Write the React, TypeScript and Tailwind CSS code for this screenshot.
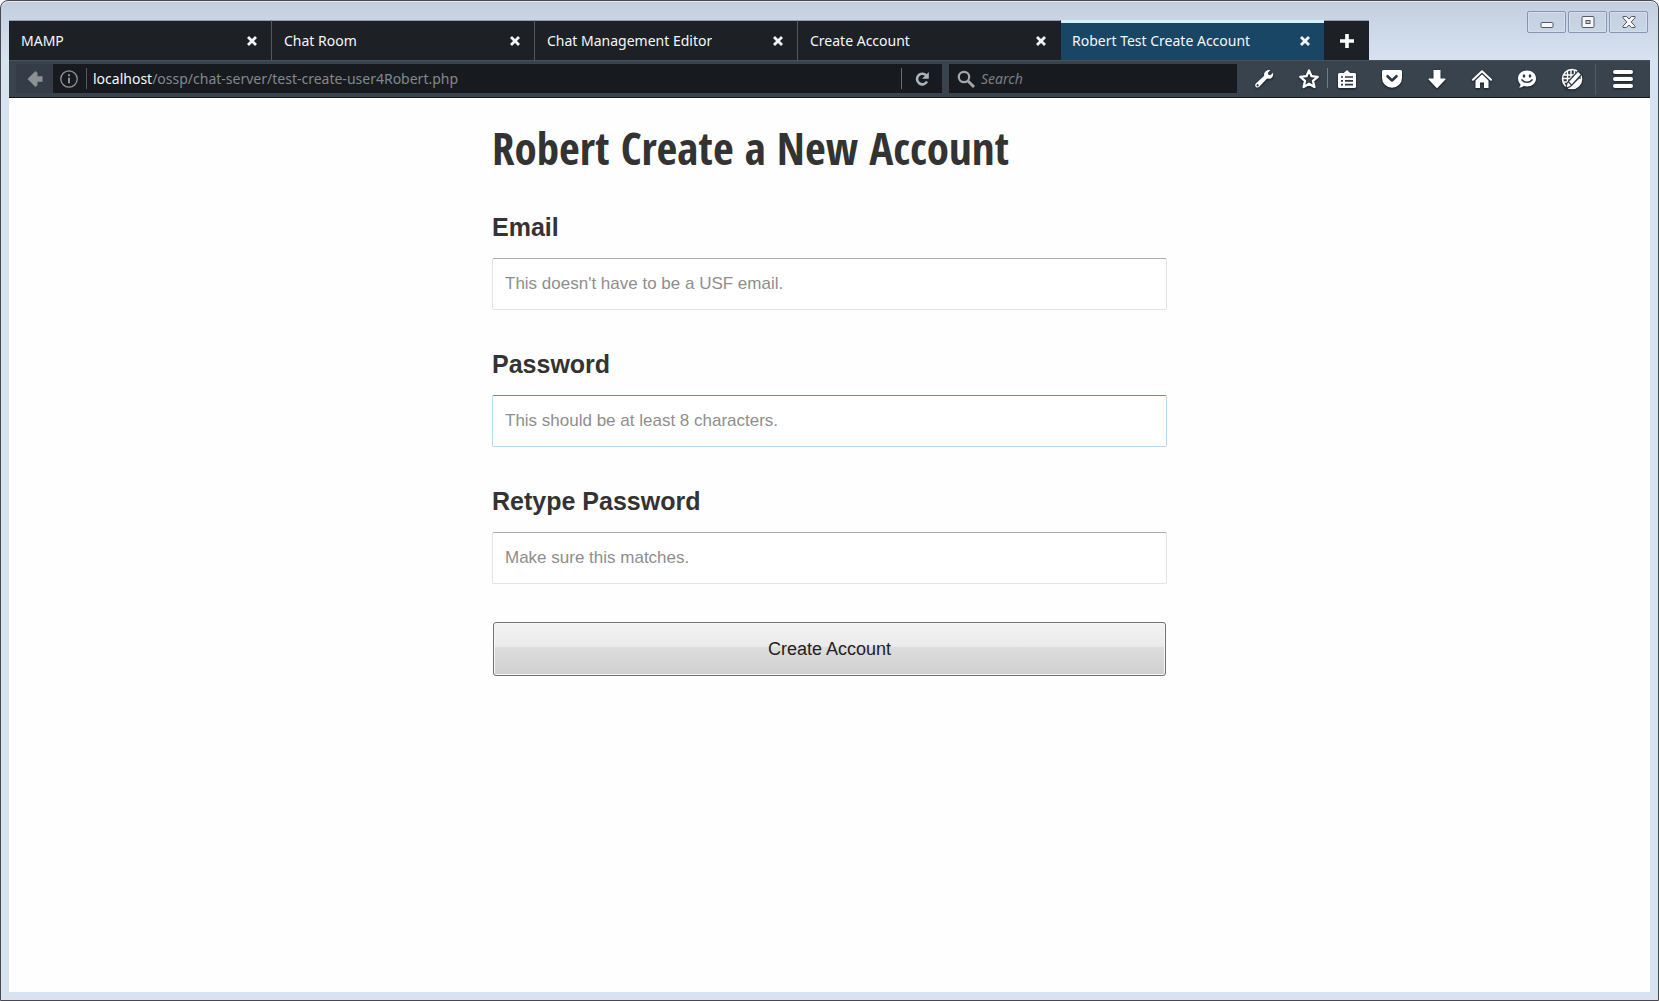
import React from 'react';

const tabs = [
  { title: 'MAMP', active: false },
  { title: 'Chat Room', active: false },
  { title: 'Chat Management Editor', active: false },
  { title: 'Create Account', active: false },
  { title: 'Robert Test Create Account', active: true },
];

const fields = [
  { id: 'email', label: 'Email', type: 'email', hint: "This doesn't have to be a USF email.", focused: false },
  { id: 'password', label: 'Password', type: 'password', hint: 'This should be at least 8 characters.', focused: true },
  { id: 'retype', label: 'Retype Password', type: 'password', hint: 'Make sure this matches.', focused: false },
];

function CloseIcon() {
  return (
    <svg width="10" height="10" viewBox="0 0 10 10" stroke="#f2f4f5" strokeWidth="2.8" aria-hidden="true">
      <path d="M1 1l8 8M9 1L1 9" />
    </svg>
  );
}

function WindowControls() {
  const style =
    'flex h-[22px] w-[39px] items-center justify-center rounded-[2px] border border-[#8796ae] bg-gradient-to-b from-[#c6d0e0] to-[#c8d6e5] shadow-[inset_0_0_0_1px_#d5dfec]';
  return (
    <div className="mt-[11px] mr-0.5 flex gap-0.5">
      <button type="button" aria-label="Minimize" className={style}>
        <svg width="14" height="14" viewBox="0 0 14 14">
          <rect x="1" y="7.5" width="12" height="5" rx="1" fill="#f7f7f7" stroke="#555962" />
        </svg>
      </button>
      <button type="button" aria-label="Maximize" className={style}>
        <svg width="14" height="14" viewBox="0 0 14 14">
          <rect x="1" y="1.5" width="12" height="11" rx="1" fill="#f7f7f7" stroke="#555962" />
          <rect x="5" y="5.5" width="4" height="3" fill="#c3cfdf" stroke="#555962" />
        </svg>
      </button>
      <button type="button" aria-label="Close" className={style}>
        <svg width="14" height="14" viewBox="0 0 14 14">
          <path
            d="M1 1.500h3.600L7 4l2.400-2.500H13v1.300L9.200 7l3.800 4.200v1.300H9.400L7 10l-2.400 2.500H1v-1.300L4.800 7 1 2.800z"
            fill="#f7f7f7"
            stroke="#555962"
          />
        </svg>
      </button>
    </div>
  );
}

function Wrench() {
  return (
    <svg width="20" height="20" viewBox="0 0 20 20">
      <path
        fillRule="evenodd"
        d="M13.500 1.200c1-.4 2-.4 2.900-.1L13.900 3.700l.5 2 2 .5 2.600-2.500c.6 2-.1 4-1.600 5.200-1.300 1-2.900 1.200-4.300.7L5.300 17.800c-.9 1-2.500 1-3.400.2-1-.9-1-2.400 0-3.400l8.300-7.800c-.7-2.300.8-4.800 3.300-5.600zM3.600 15.200a1.100 1.100 0 100 2.200 1.100 1.100 0 000-2.200z"
        fill="white"
      />
    </svg>
  );
}

function Star() {
  return (
    <svg width="22" height="22" viewBox="0 0 22 22">
      <path
        d="M11 2.500l2.500 5.700 6.200.6-4.700 4.100 1.400 6.100L11 15.800 5.600 19 7 12.900 2.300 8.800l6.200-.6z"
        fill="none"
        stroke="white"
        strokeWidth="2.300"
        strokeLinejoin="round"
      />
    </svg>
  );
}

function Clipboard() {
  return (
    <svg width="20" height="20" viewBox="0 0 20 20">
      <path d="M2.500 4h4.300L10 1l3.200 3h4.300A1.500 1.500 0 0119 5.500v12a1.500 1.500 0 01-1.500 1.500h-15A1.500 1.500 0 011 17.500v-12A1.500 1.500 0 012.500 4z" fill="white" />
      <path d="M4 8h2M8 8h8M4 11.800h2M8 11.800h8M4 15.600h2M8 15.600h8" stroke="#303943" strokeWidth="1.700" />
    </svg>
  );
}

function Pocket() {
  return (
    <svg width="22" height="20" viewBox="0 0 22 20">
      <path d="M2.500 1h17A1.500 1.500 0 0121 2.500v6.200a10 10 0 01-20 0V2.500A1.500 1.500 0 012.500 1z" fill="white" />
      <path d="M6.500 7.200l4.500 4.300 4.500-4.300" fill="none" stroke="#303943" strokeWidth="2.600" strokeLinecap="round" strokeLinejoin="round" />
    </svg>
  );
}

function Download() {
  return (
    <svg width="20" height="20" viewBox="0 0 20 20">
      <path d="M6.500 1h7v8.500H18a.6.6 0 01.4 1L10.600 18.800a.9.9 0 01-1.200 0L1.600 10.500a.6.6 0 01.4-1h4.500z" fill="white" />
    </svg>
  );
}

function Home() {
  return (
    <svg width="20" height="20" viewBox="0 0 20 20">
      <path d="M1 10.800L10 2.200l9 8.600" fill="none" stroke="white" strokeWidth="2" strokeLinecap="round" strokeLinejoin="round" />
      <path d="M10 5.200l6.500 6.200V19H12v-5.500H8V19H3.500v-7.600z" fill="white" />
    </svg>
  );
}

function Chat() {
  return (
    <svg width="20" height="20" viewBox="0 0 20 20">
      <path d="M10 1.500c5 0 9 3.200 9 8s-4 8-9 8c-1.200 0-2.300-.2-3.300-.5-1.400 1-3 1.500-4.700 1.500 1-1 1.500-2 1.500-3.200C2 13.900 1 11.900 1 9.500c0-4.800 4-8 9-8z" fill="white" />
      <ellipse cx="7" cy="7" rx="1.300" ry="1.700" fill="#303943" />
      <ellipse cx="13" cy="7" rx="1.300" ry="1.700" fill="#303943" />
      <path d="M5 11c2.500 3 7.500 3 10 0" fill="none" stroke="#303943" strokeWidth="1.700" strokeLinecap="round" />
    </svg>
  );
}

function GlobePencil() {
  return (
    <svg width="22" height="22" viewBox="0 0 22 22">
      <circle cx="11" cy="11" r="9.500" fill="#303943" stroke="white" strokeWidth="1.600" />
      <path
        d="M3 7h14M2 10.500h15M2.500 14h10M6.500 3v14M10 2v15M13.500 2v10"
        stroke="white"
        strokeWidth="1.400"
      />
      <path d="M8 20.200c6 1 11.500-2.200 12.400-8.700l-2-1z" fill="white" />
      <path d="M5 20l1-5L17 3l3.500 3.500L9.500 18.500z" fill="white" stroke="#303943" strokeWidth="1.200" />
      <path d="M7.500 14l3 3" stroke="#303943" strokeWidth="1.200" />
    </svg>
  );
}

function ToolButton({ label, children }: { label: string; children: React.ReactNode }) {
  return (
    <button type="button" aria-label={label} className="flex w-[45px] items-center justify-center drop-shadow-[0_1px_1px_#14181c]">
      {children}
    </button>
  );
}

function TabStrip() {
  return (
    <div className="flex h-[60px] items-start justify-between">
      <div role="tablist" className="mt-5 flex h-10 min-w-0 flex-1">
        {tabs.map((tab) => (
          <div
            key={tab.title}
            className={
              tab.active
                ? 'flex w-[263px] min-w-0 items-center justify-between border-t-3 border-[#d2f2ff] bg-[#1a4666] pr-3.5 pb-0.5 pl-[11px]'
                : 'flex w-[263px] min-w-0 items-center justify-between border-t border-r border-t-[#8fa1b0] border-r-[#54595d] bg-[#1d2125] pr-3.5 pl-3 [&:nth-child(4)]:border-r-[#1d2125]'
            }
          >
            <button type="button" role="tab" aria-selected={tab.active} className="truncate text-[14px] leading-5 text-[#f5f7fa]">
              {tab.title}
            </button>
            <button type="button" aria-label={'Close ' + tab.title}>
              <CloseIcon />
            </button>
          </div>
        ))}
        <button type="button" aria-label="New tab" className="flex w-[45px] items-center justify-center border-t border-[#8fa1b0] bg-[#1d2125]">
          <svg width="14" height="14" viewBox="0 0 14 14" stroke="white" strokeWidth="3.600">
            <path d="M7 0v14M0 7h14" />
          </svg>
        </button>
      </div>
      <WindowControls />
    </div>
  );
}

function NavBar() {
  return (
    <div className="flex h-[38px] border-t border-b border-t-[#46515c] border-b-[#14181d] bg-[#39434e] pt-[3px] pl-[7px]">
      <button type="button" aria-label="Back" className="flex h-[29px] w-[37px] items-center justify-center bg-[#333c47]">
        <svg width="16" height="18" viewBox="0 0 16 18">
          <path d="M.5 9L8.500 1l2 2v3.200H15.500v5.600H10.500V15l-2 2z" fill="#8c9196" />
        </svg>
      </button>
      <div className="flex h-[29px] min-w-0 flex-1 items-center bg-[#171b1f]">
        <button type="button" aria-label="Site information" className="ml-[7px]">
          <svg width="18" height="18" viewBox="0 0 18 18" fill="none" stroke="#929699">
            <circle cx="9" cy="9" r="8.200" strokeWidth="1.300" />
            <path d="M9 7.800v5.500M9 4.300v2" strokeWidth="1.900" />
          </svg>
        </button>
        <span className="mr-1.5 ml-2 h-[21px] w-px bg-[#55595d]" />
        <a href="#address" className="min-w-0 flex-1 truncate text-[14px] leading-5 text-[#84888b]">
          <span className="text-[#f5f7fa]">localhost</span>/ossp/chat-server/test-create-user4Robert.php
        </a>
        <span className="h-[21px] w-px bg-[#6a6e72]" />
        <button type="button" aria-label="Reload" className="flex w-10 justify-center">
          <svg width="16" height="16" viewBox="0 0 16 16">
            <path d="M12.200 4.400A5.300 5.300 0 1013 10.500" fill="none" stroke="#a9b4bd" strokeWidth="2.600" />
            <path d="M14.800 1v6.800H8z" fill="#a9b4bd" />
          </svg>
        </button>
      </div>
      <label className="ml-[7px] flex h-[29px] w-[288px] items-center bg-[#171b1f] pl-2">
        <svg width="18" height="18" viewBox="0 0 18 18" fill="none" stroke="#a5a8aa" className="shrink-0">
          <circle cx="7" cy="7" r="5.200" strokeWidth="2.200" />
          <path d="M11 11l6 6" strokeWidth="2.900" />
        </svg>
        <input
          aria-label="Search"
          placeholder="Search"
          className="ml-1.5 w-full min-w-0 bg-transparent text-[14px] leading-5 italic outline-none placeholder:text-[#7b7e80]"
        />
      </label>
      <div className="flex h-[29px] pl-1">
        <ToolButton label="Developer tools"><Wrench /></ToolButton>
        <ToolButton label="Bookmark this page"><Star /></ToolButton>
        <span className="-mr-1 -ml-1 mt-1 h-5 w-px bg-[#747b83]" />
        <ToolButton label="Bookmarks"><Clipboard /></ToolButton>
        <ToolButton label="Save to Pocket"><Pocket /></ToolButton>
        <ToolButton label="Downloads"><Download /></ToolButton>
        <ToolButton label="Home"><Home /></ToolButton>
        <ToolButton label="Chat"><Chat /></ToolButton>
        <ToolButton label="Web editor"><GlobePencil /></ToolButton>
        <span className="ml-px h-[31px] w-px bg-[#535c65]" />
        <button type="button" aria-label="Menu" className="flex w-[54px] items-center justify-center drop-shadow-[0_1px_1px_#14181c]">
          <svg width="20" height="18" viewBox="0 0 20 18" stroke="white" strokeWidth="4" strokeLinecap="round">
            <path d="M2 2h16M2 9h16M2 16h16" />
          </svg>
        </button>
      </div>
    </div>
  );
}

export default function App() {
  return (
    <div className="bg-white">
      <div className="flex min-h-screen flex-col rounded-t-lg border border-[#4a484e] bg-gradient-to-b from-[#c3cfdf] to-[#d7e3f1] to-[60px] px-2 pb-2 font-['Noto_Sans','Open_Sans',sans-serif] shadow-[inset_0_1px_0_#e4ebf4]">
        <header className="-mt-px">
          <TabStrip />
          <NavBar />
        </header>
        <main className="flex-1 bg-[#fefefe] px-4 font-['Liberation_Sans',Arial,sans-serif] text-[#333333]">
          <form className="mx-auto w-full max-w-[675px] pt-5" onSubmit={(e) => e.preventDefault()}>
            <h1 className="font-['Open_Sans_Condensed','Liberation_Sans_Narrow','Noto_Sans',sans-serif] text-[45px] leading-[60px] font-bold">
              Robert Create a New Account
            </h1>
            <div className="flex flex-col gap-[39px] pt-[34px]">
              {fields.map((field) => (
                <div key={field.id}>
                  <label htmlFor={field.id} className="block pb-4 text-[25px] leading-[30px] font-bold">
                    {field.label}
                  </label>
                  <input
                    id={field.id}
                    type={field.type}
                    placeholder={field.hint}
                    className={
                      field.focused
                        ? 'block h-[52px] w-full rounded-[2px] border border-[#b5d8ef] border-t-[#5b8fb5] bg-white px-3 text-[17px] outline-none placeholder:text-[#8e8e8e]'
                        : 'block h-[52px] w-full rounded-[2px] border border-[#e1e3e6] border-t-[#abadb3] bg-white px-3 text-[17px] outline-none placeholder:text-[#8e8e8e]'
                    }
                  />
                </div>
              ))}
            </div>
            <div className="px-px pt-[38px]">
              <button
                type="submit"
                className="block h-[54px] w-full rounded-[3px] border border-[#707070] bg-linear-[to_bottom,#f2f2f2_0%,#ebebeb_45%,#dddddd_46%,#cfcfcf_100%] text-[18px] text-[#222222] shadow-[inset_0_0_0_1px_#f8f8f8]"
              >
                Create Account
              </button>
            </div>
          </form>
        </main>
      </div>
    </div>
  );
}
